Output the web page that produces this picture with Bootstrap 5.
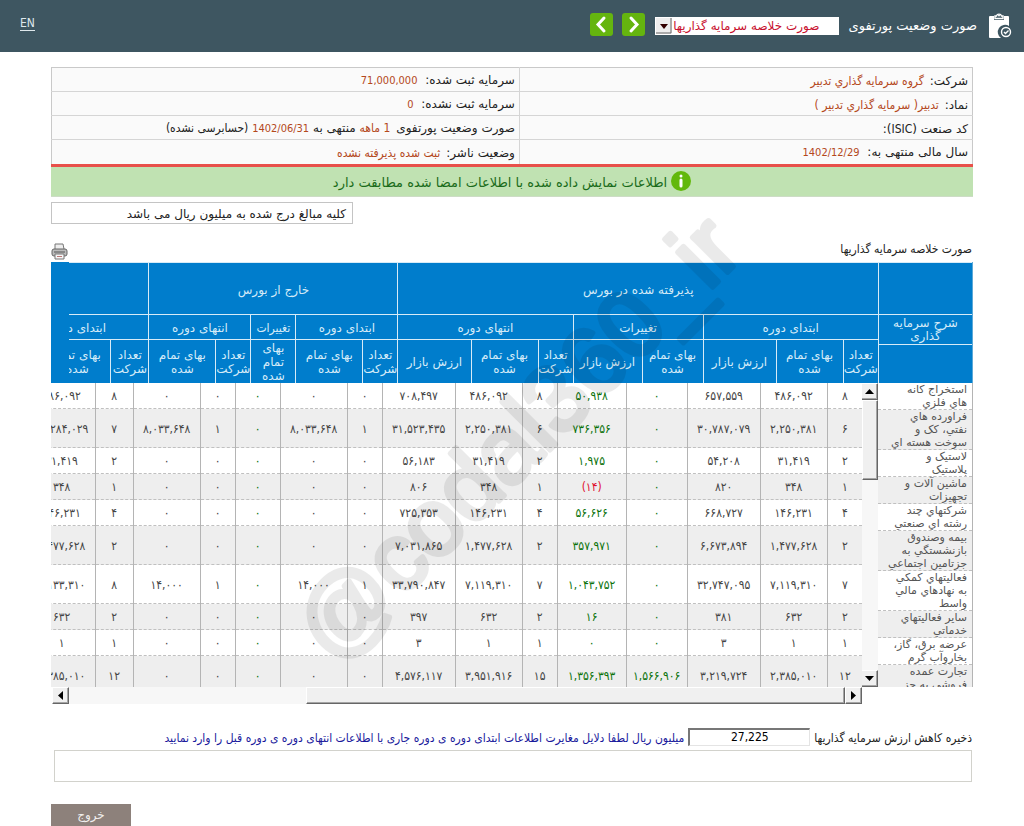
<!DOCTYPE html>
<html lang="fa" dir="rtl">
<head>
<meta charset="utf-8">
<meta name="viewport" content="width=device-width, initial-scale=1">
<title>صورت وضعیت پورتفوی</title>
<link rel="stylesheet" href="https://cdn.jsdelivr.net/npm/bootstrap@5.3.0/dist/css/bootstrap.min.css">
<style>
  body { font: 12px/14px "DejaVu Sans", sans-serif; color: #222; background: #fff; overflow-x: hidden; }
  .narrow, .cells { font-family: "DejaVu Sans Condensed", "DejaVu Sans", sans-serif; }
  .topbar { height: 52px; background: #3e5661; color: #fff; padding: 0 12px 0 20px; }
  .topbar h1 { font-size: 13px; line-height: 18px; margin: 0 11px 0 0; }
  .lang { color: #dfe8ec; font-size: 12px; line-height: 13px; border-bottom: 1px solid #dfe8ec; }
  .report-pick { width: 184px; height: 18px; position: relative; margin: 0 9px 0 10px; }
  .report-pick select { appearance: none; border: 0; border-radius: 0; background: #fff; color: #c8102e; font-size: 12px; line-height: 18px; padding: 0 20px 0 0; width: 100%; height: 18px; display: block; }
  .report-pick svg { position: absolute; left: 1px; top: 1px; pointer-events: none; }
  .nav-btn { width: 23px; height: 23px; background: #65b50f; border: 0; border-radius: 3px; padding: 0; }
  .nav-pair { gap: 9px; }
  .sheet { padding: 15px 51px 0; }
  .info-grid { border: 1px solid #c9c9c9; border-bottom: 0; background: #fafafa; table-layout: fixed; }
  .info-grid td { height: 24px; padding: 2px 4px 0; border-bottom: 1px solid #d5d5d5; font-size: 12px; line-height: 16px; }
  .info-grid tr:last-child td { border-bottom: 0; }
  .info-grid td + td { border-right: 1px solid #d5d5d5; }
  .val { color: #b4481c; margin-right: 2px; font-family: "DejaVu Sans Condensed", "DejaVu Sans", sans-serif; }
  .num { font-size: 11px; margin-right: 4px; }
  .okline { border-top: 3px solid #e8504a; background: #c0e2b2; color: #1a6b1a; height: 33px; font-size: 13px; border-bottom: 1px solid #cddcc6; }
  .unit-note { width: 302px; height: 22px; border: 1px solid #c4c4c4; padding: 2px 6px 0 0; margin-top: 5px; }
  .title-row { height: 38px; padding: 0 1px 2px 0; }
  .desc-col { width: 95px; flex: none; }
  .head-blue { background: #007dcc; color: #d5ebf8; }
  .head-blue table { table-layout: fixed; border-collapse: collapse; }
  .head-blue th { font-weight: normal; text-align: center; vertical-align: middle; padding: 3px 0 0; border-left: 1px solid #d7ebf7; border-top: 1px solid #d7ebf7; }
  .head-blue .leaf th { padding-top: 1px; line-height: 14px; }
  .head-wrap { height: 121px; overflow: hidden; }
  .w-head { width: 871px; }
  .desc-head { border-right: 1px solid #5ba9d8; }
  .head-blue .desc-title { padding: 1px 8px 0; line-height: 13px; }
  .pane { height: 304px; overflow: hidden; }
  .cells { table-layout: fixed; width: 871px; border-collapse: collapse; color: #444; }
  .cells td { text-align: center; vertical-align: middle; padding: 2px 0 0; border-left: 1px solid #b4b4b4; border-bottom: 1px dashed #c0c0c0; line-height: 13px; }
  .cells tr:nth-child(even), .names tr:nth-child(even) { background: #eee; }
  .names { width: 100%; border-collapse: collapse; color: #555; border-right: 1px solid #b4b4b4; font-size: 11px; }
  .names td { line-height: 13px; padding: 0 5px 0 0; border-bottom: 1px dashed #c0c0c0; white-space: nowrap; }
  .gain { color: #0a720a; }
  .loss { color: #e01030; }
  .sb { background: #f7f7f7; }
  .sb-v { width: 17px; }
  .sb-h { height: 17px; margin-left: 1px; }
  .sb-btn, .sb-thumb { background: #f0f0f0; border: 1px solid; border-color: #fff #666 #666 #fff; padding: 0; display: flex; align-items: center; justify-content: center; box-shadow: inset -1px -1px #a5a5a5; flex: none; }
  .sb-btn { width: 17px; height: 17px; }
  .reserve { padding-right: 1px; margin-top: 24px; }
  .reserve label, .reserve span { padding-top: 3px; white-space: nowrap; }
  .reserve input { width: 122px; height: 18px; border: 1px solid #e4e4e4; border-top: 2px solid #777; border-left: 2px solid #777; text-align: center; font-size: 12px; line-height: 14px; padding: 0; margin: 0 4px; border-radius: 0; flex: none; }
  .reserve span { color: #1a1a9c; }
  .reason { height: 32px; border: 1px solid #d2d2cc; resize: none; border-radius: 0; display: block; width: auto; margin: 4px 1px 0 3px; }
  .exit { width: 80px; height: 22px; background: #8d817b; color: #f1efee; border: 0; margin-top: 22px; padding: 0; font-size: 12px; }
  .watermark { position: absolute; left: 252px; top: 176px; pointer-events: none; opacity: .08; }
</style>
</head>
<body>
<header class="topbar d-flex align-items-center">
  <svg width="24" height="28" viewBox="0 0 24 28" aria-hidden="true">
    <path d="M2 4h4v4h10V4h4q1 0 1 1v9a7 7 0 0 0-8 12H2q-1 0-1-1V5q0-1 1-1z" fill="#fff"/>
    <path d="M7 6.500V4h1.500a2.600 2.600 0 0 1 5 0H15v2.500z" fill="#3e5661" stroke="#fff" stroke-width="1.400"/><circle cx="11" cy="3.500" r="1" fill="#fff"/>
    <circle cx="18" cy="20" r="4.500" fill="none" stroke="#fff" stroke-width="1.400"/><path d="M16 20l1.500 1.500 3-3" fill="none" stroke="#fff" stroke-width="1.400"/>
  </svg>
  <h1>صورت وضعیت پورتفوی</h1>
  <div class="report-pick">
    <select aria-label="گزارش"><option>صورت خلاصه سرمایه گذاریها</option></select>
    <svg width="16" height="16"><rect width="16" height="16" fill="#eee"/><path d="M15 0v15H0" fill="none" stroke="#666"/><path d="M4 6h8l-4 5z" fill="#300"/></svg>
  </div>
  <div class="nav-pair d-flex mb-1">
    <button class="nav-btn d-flex" aria-label="بعدی"><svg width="23" height="23"><path d="M9 5l6 6.500L9 18" fill="none" stroke="#fff" stroke-width="3" stroke-linecap="round"/></svg></button>
    <button class="nav-btn d-flex" aria-label="قبلی"><svg width="23" height="23"><path d="M14 5l-6 6.500L14 18" fill="none" stroke="#fff" stroke-width="3" stroke-linecap="round"/></svg></button>
  </div>
  <a class="lang narrow text-decoration-none me-auto mb-1" href="#">EN</a>
</header>

<main class="sheet">
  <table class="info-grid w-100">
    <colgroup><col style="width:49.2%"><col></colgroup>
    <tr><td>شرکت: <span class="val">گروه سرمایه گذاري تدبیر</span></td><td>سرمایه ثبت شده: <span class="val num">71,000,000</span></td></tr>
    <tr><td>نماد: <span class="val">تدبیر( سرمایه گذاري تدبیر )</span></td><td>سرمایه ثبت نشده: <span class="val num">0</span></td></tr>
    <tr><td>کد صنعت (<span class="narrow">ISIC</span>):</td><td>صورت وضعیت پورتفوی <span class="val">1 ماهه</span> منتهی به <span class="val num m-0">1402/06/31</span> <span class="narrow">(حسابرسی نشده)</span></td></tr>
    <tr><td>سال مالی منتهی به: <span class="val num">1402/12/29</span></td><td>وضعیت ناشر: <span class="val">ثبت شده پذیرفته نشده</span></td></tr>
  </table>
  <div class="okline d-flex align-items-center justify-content-center gap-1">
    <svg width="20" height="20" aria-hidden="true"><circle cx="10" cy="10" r="10" fill="#62b80c"/><path d="M10 9v6" stroke="#fff" stroke-width="3" stroke-linecap="round"/><circle cx="10" cy="5" r="1.500" fill="#fff"/></svg>
    <span class="pt-1">اطلاعات نمایش داده شده با اطلاعات امضا شده مطابقت دارد</span>
  </div>
  <div class="unit-note me-auto d-flex align-items-center">کلیه مبالغ درج شده به میلیون ریال می باشد</div>
  <div class="title-row d-flex justify-content-between align-items-end">
    <span class="narrow pb-1">صورت خلاصه سرمایه گذاریها</span>
    <a href="#" aria-label="چاپ" class="d-flex"><svg width="17" height="17" viewBox="0 0 17 17"><path d="M4 6V1h8l1 5" fill="#eee" stroke="#777"/><rect x="1" y="6" width="15" height="7" rx="2" fill="#bbb" stroke="#666"/><path d="M3 9h11" stroke="#555"/><path d="M4 11h9v5H4z" fill="#f6f6f6" stroke="#777"/><path d="M6 13.500h5" stroke="#b77"/></svg></a>
  </div>

  <div class="d-flex">
    <div class="desc-col">
      <div class="head-blue head-wrap desc-head">
        <table class="w-100">
          <tr style="height:52px"><th></th></tr>
          <tr style="height:30px"><th class="desc-title" scope="col">شرح سرمایه گذاری</th></tr>
          <tr style="height:39px"><th></th></tr>
        </table>
      </div>
      <div class="pane"><table class="names"><tbody id="names"></tbody></table></div>
    </div>
    <div class="flex-grow-1" style="min-width:0">
      <div class="head-blue">
        <div class="head-wrap" style="margin-left:18px">
          <table class="w-head">
            <colgroup id="headcols"></colgroup>
            <tr style="height:52px"><th colspan="8">پذیرفته شده در بورس</th><th colspan="5">خارج از بورس</th><th colspan="3"></th></tr>
            <tr style="height:25px"><th colspan="3">ابتدای دوره</th><th colspan="2">تغییرات</th><th colspan="3">انتهای دوره</th><th colspan="2">ابتدای دوره</th><th class="narrow">تغییرات</th><th colspan="2">انتهای دوره</th><th colspan="3">ابتدای دوره</th></tr>
            <tr class="leaf" style="height:44px"><th>تعداد شرکت</th><th>بهای تمام شده</th><th>ارزش بازار</th><th>بهای تمام شده</th><th>ارزش بازار</th><th>تعداد شرکت</th><th>بهای تمام شده</th><th>ارزش بازار</th><th>تعداد شرکت</th><th>بهای تمام شده</th><th>بهای تمام شده</th><th>تعداد شرکت</th><th>بهای تمام شده</th><th>تعداد شرکت</th><th>بهای تمام شده</th><th></th></tr>
          </table>
        </div>
      </div>
      <div class="d-flex">
        <div class="sb sb-v pane d-flex flex-column">
          <div class="sb-btn"><svg width="9" height="5"><path d="M0 5h9L4.500 0z"/></svg></div>
          <div class="sb-thumb" style="height:80px"></div>
          <div class="sb-btn mt-auto"><svg width="9" height="5"><path d="M0 0h9L4.500 5z"/></svg></div>
        </div>
        <div class="flex-grow-1" style="min-width:0">
          <div class="pane"><table class="cells"><colgroup id="bodycols"></colgroup><tbody id="cells"></tbody></table></div>
          <div class="sb sb-h d-flex">
            <div class="sb-btn"><svg width="5" height="9"><path d="M0 0v9L5 4.500z"/></svg></div>
            <div class="sb-thumb h-100" style="width:66.600%"></div>
            <div class="sb-btn me-auto"><svg width="5" height="9"><path d="M5 0v9L0 4.500z"/></svg></div>
          </div>
        </div>
      </div>
    </div>
  </div>

  <div class="reserve narrow d-flex align-items-center">
    <label for="reserve">ذخیره کاهش ارزش سرمایه گذاریها</label>
    <input id="reserve" type="text" value="27,225">
    <span>میلیون ریال لطفا دلایل مغایرت اطلاعات ابتدای دوره ی دوره جاری با اطلاعات انتهای دوره ی دوره قبل را وارد نمایید</span>
  </div>
  <div class="d-flex flex-column"><textarea class="reason" aria-label="دلایل مغایرت"></textarea></div>
  <div class="d-flex justify-content-end"><button class="exit">خروج</button></div>
</main>

<svg class="watermark" width="500" height="500" aria-hidden="true">
  <g transform="translate(82 490) rotate(-45)" font-family="Liberation Sans" font-size="94" stroke="#000" stroke-width="5" stroke-linejoin="round"><text direction="ltr">@codal360_ir</text></g>
</svg>

<script src="https://cdn.jsdelivr.net/npm/bootstrap@5.3.0/dist/js/bootstrap.bundle.min.js"></script>
<script>
  const widths = [35, 67, 73, 61, 69, 35, 67, 73, 35, 67, 45, 35, 67, 38, 67, 37];
  const rows = [
    ['استخراج کانه|هاي فلزي', 26, [8, 486092, 657559, 0, 50938, 8, 486092, 708497, 0, 0, 0, 0, 0, 8, 486092]],
    ['فراورده هاي|نفتي، کک و|سوخت هسته اي', 39, [6, 2250381, 30787079, 0, 736356, 6, 2250381, 31523435, 1, 8033648, 0, 1, 8033648, 7, 10284029]],
    ['لاستیک و|پلاستیک', 26, [2, 31419, 54208, 0, 1975, 2, 31419, 56183, 0, 0, 0, 0, 0, 2, 31419]],
    ['ماشین آلات و|تجهیزات', 26, [1, 348, 820, 0, -14, 1, 348, 806, 0, 0, 0, 0, 0, 1, 348]],
    ['شرکتهاي چند|رشته اي صنعتي', 26, [4, 146231, 668727, 0, 56626, 4, 146231, 725353, 0, 0, 0, 0, 0, 4, 146231]],
    ['بیمه وصندوق|بازنشستگي به|جزتامین اجتماعي', 39, [2, 1477628, 6673894, 0, 357971, 2, 1477628, 7031865, 0, 0, 0, 0, 0, 2, 1477628]],
    ['فعالیتهاي کمکي|به نهادهاي مالي|واسط', 39, [7, 7119310, 32747095, 0, 1043752, 7, 7119310, 33790847, 1, 14000, 0, 1, 14000, 8, 7133310]],
    ['سایر فعالیتهاي|خدماتي', 26, [2, 632, 381, 0, 16, 2, 632, 397, 0, 0, 0, 0, 0, 2, 632]],
    ['عرضه برق، گاز،|بخاروآب گرم', 26, [1, 1, 3, 0, 0, 1, 1, 3, 0, 0, 0, 0, 0, 1, 1]],
    ['تجارت عمده|فروشي به جز', 39, [12, 2385010, 3219724, 1566906, 1356393, 15, 3951916, 4576117, 0, 0, 0, 0, 0, 12, 2385010]]
  ];
  const changeColumns = [3, 4, 10];
  const fa = n => {
    const s = Math.abs(n).toLocaleString('en-US').replace(/\d/g, d => '۰۱۲۳۴۵۶۷۸۹'[d]);
    return n < 0 ? `(${s})` : s;
  };
  const cols = widths.map(w => `<col style="width:${w}px">`).join('');
  headcols.innerHTML = bodycols.innerHTML = cols;
  document.getElementById('names').innerHTML = rows.map(r => `<tr style="height:${r[1] + 1}px"><td class="align-top">${r[0].replace(/\|/g, '<br>')}</td></tr>`).join('');
  document.getElementById('cells').innerHTML = rows.map(r => `<tr style="height:${r[1]}px">` +
    r[2].map((v, i) => `<td class="${v < 0 ? 'loss' : changeColumns.includes(i) ? 'gain' : ''}">${fa(v)}</td>`).join('') + '<td></td></tr>').join('');
</script>
</body>
</html>
